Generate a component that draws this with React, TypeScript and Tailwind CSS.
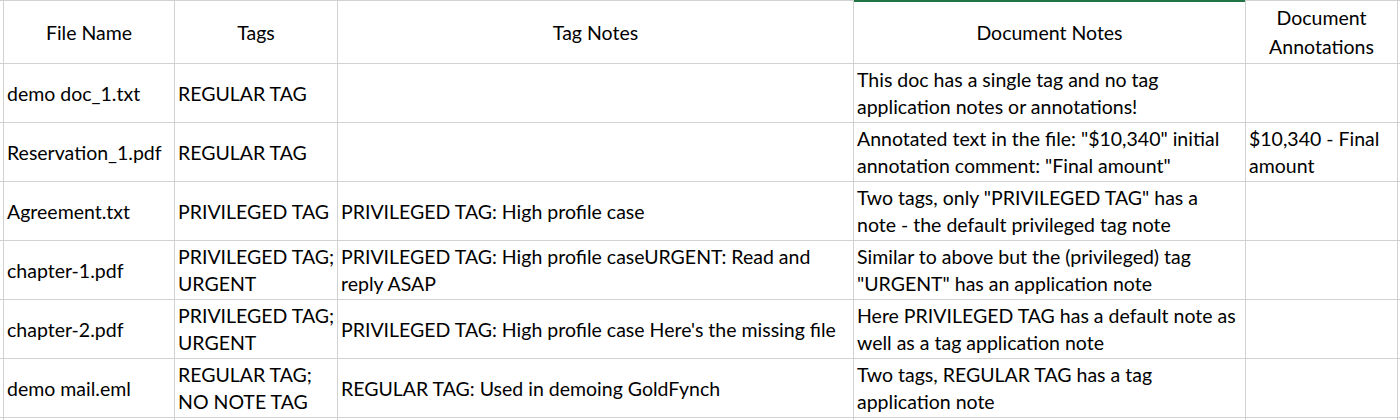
type Row = {
  file: string;
  tags: string[];
  tagNotes: string[];
  docNotes: string[];
  annotations: string[];
};

const ROWS: Row[] = [
  {
    file: "demo doc_1.txt",
    tags: ["REGULAR TAG"],
    tagNotes: [],
    docNotes: ["This doc has a single tag and no tag", "application notes or annotations!"],
    annotations: [],
  },
  {
    file: "Reservation_1.pdf",
    tags: ["REGULAR TAG"],
    tagNotes: [],
    docNotes: ['Annotated text in the file: "$10,340" initial', 'annotation comment: "Final amount"'],
    annotations: ["$10,340 - Final", "amount"],
  },
  {
    file: "Agreement.txt",
    tags: ["PRIVILEGED TAG"],
    tagNotes: ["PRIVILEGED TAG: High profile case"],
    docNotes: ['Two tags, only "PRIVILEGED TAG" has a', "note - the default privileged tag note"],
    annotations: [],
  },
  {
    file: "chapter-1.pdf",
    tags: ["PRIVILEGED TAG;", "URGENT"],
    tagNotes: ["PRIVILEGED TAG: High profile caseURGENT: Read and", "reply ASAP"],
    docNotes: ["Similar to above but the (privileged) tag", '"URGENT" has an application note'],
    annotations: [],
  },
  {
    file: "chapter-2.pdf",
    tags: ["PRIVILEGED TAG;", "URGENT"],
    tagNotes: ["PRIVILEGED TAG: High profile case Here's the missing file"],
    docNotes: ["Here PRIVILEGED TAG has a default note as", "well as a tag application note"],
    annotations: [],
  },
  {
    file: "demo mail.eml",
    tags: ["REGULAR TAG;", "NO NOTE TAG"],
    tagNotes: ["REGULAR TAG: Used in demoing GoldFynch"],
    docNotes: ["Two tags, REGULAR TAG has a tag", "application note"],
    annotations: [],
  },
];

function Cell({ lines, center }: { lines: string[]; center?: boolean }) {
  return (
    <div
      className={
        "flex flex-col justify-center overflow-hidden bg-white px-[3px] leading-[27px] " +
        (center ? "items-center text-center" : "items-start")
      }
    >
      {lines.map((l) => (
        <span key={l} className="whitespace-nowrap">
          {l}
        </span>
      ))}
    </div>
  );
}

export default function App() {
  return (
    <div
      className="grid h-[420px] w-[1400px] grid-cols-[3px_170px_162px_515px_391px_151px_1fr] grid-rows-[62px_58px_58px_58px_58px_58px_58px_1fr] gap-px overflow-hidden bg-[#d2d2d2] pt-px text-[19.5px] text-black"
      style={{ fontFamily: "Lato, 'Open Sans', sans-serif" }}
    >
      <div className="bg-white" />
      <Cell center lines={["File Name"]} />
      <Cell center lines={["Tags"]} />
      <Cell center lines={["Tag Notes"]} />
      <div className="-mt-px flex flex-col items-center justify-center border-t-2 border-[#217346] bg-white">
        <span>Document Notes</span>
      </div>
      <div className="flex flex-col items-center justify-center bg-white leading-[29px]">
        <span>Document</span>
        <span>Annotations</span>
      </div>
      <div className="bg-white" />

      {ROWS.map((r) => (
        <>
          <div key={r.file + "-l"} className="bg-white" />
          <Cell lines={[r.file]} />
          <Cell lines={r.tags} />
          <Cell lines={r.tagNotes} />
          <Cell lines={r.docNotes} />
          <Cell lines={r.annotations} />
          <div className="bg-white" />
        </>
      ))}

      {Array.from({ length: 7 }).map((_, i) => (
        <div key={i} className="bg-white" />
      ))}
    </div>
  );
}
